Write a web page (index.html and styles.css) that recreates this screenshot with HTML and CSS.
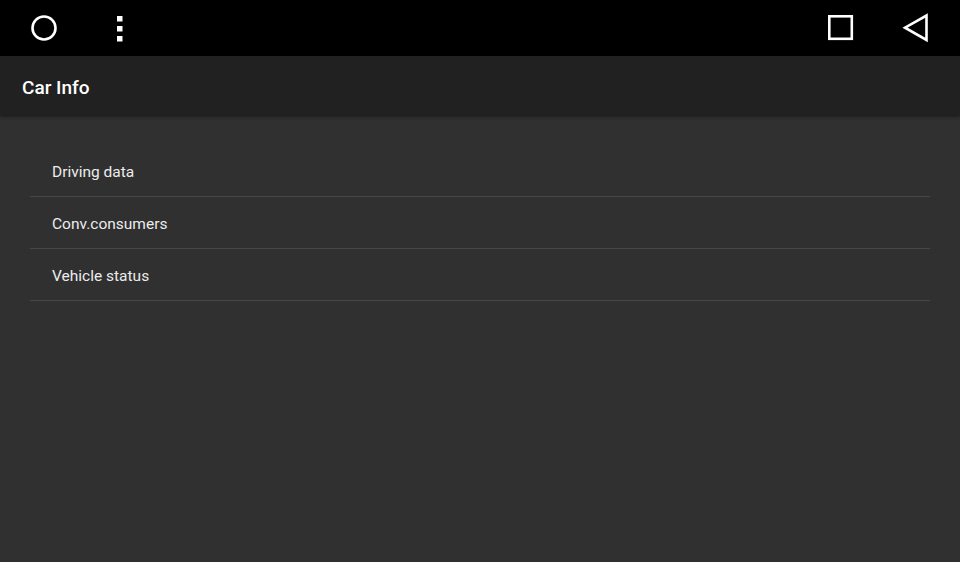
FILE: index.html
```html
<!DOCTYPE html>
<html>
<head>
<meta charset="utf-8">
<link rel="stylesheet" href="styles.css">
</head>
<body>
<div class="status">
  <div class="status-left">
    <svg class="ico" width="28" height="28" viewBox="0 0 28 28"><circle cx="14" cy="14" r="11.5" fill="none" stroke="#fff" stroke-width="2.6"/></svg>
    <svg class="ico dots" width="8" height="28" viewBox="0 0 8 28"><rect x="1" y="1" width="5.5" height="5.5" fill="#fff"/><rect x="1" y="11" width="5.5" height="5.5" fill="#fff"/><rect x="1" y="21" width="5.5" height="5.5" fill="#fff"/></svg>
  </div>
  <div class="status-right">
    <svg class="ico" width="28" height="28" viewBox="0 0 28 28"><rect x="2.3" y="2.3" width="22.5" height="22.5" fill="none" stroke="#fff" stroke-width="2.6"/></svg>
    <svg class="ico" width="28" height="30" viewBox="0 0 28 30"><path d="M24.5 2.5 L24.5 27 L3 14.7 Z" fill="none" stroke="#fff" stroke-width="2.6" stroke-linejoin="miter"/></svg>
  </div>
</div>
<div class="appbar"><span class="title">Car Info</span></div>
<div class="content">
  <ul class="list">
    <li class="item">Driving data</li>
    <li class="item">Conv.consumers</li>
    <li class="item">Vehicle status</li>
  </ul>
</div>
</body>
</html>
```
FILE: styles.css
```css
html, body {
  margin: 0;
  padding: 0;
  height: 100%;
  background: #303030;
  font-family: Roboto, "Liberation Sans", sans-serif;
  overflow: hidden;
}
.status {
  height: 56px;
  background: #000;
  display: flex;
  justify-content: space-between;
  align-items: center;
}
.status-left {
  display: flex;
  align-items: center;
  gap: 58px;
  padding-left: 30px;
  margin-top: -1px;
}
.status-right {
  display: flex;
  align-items: center;
  gap: 47px;
  padding-right: 30px;
}
.ico { display: block; }
.dots { margin-top: 2px; }
.appbar {
  height: 59px;
  background: #212121;
  display: flex;
  align-items: center;
  padding-left: 22px;
  position: relative;
  box-shadow: 0 1px 3px rgba(0,0,0,0.35), 0 2px 4px rgba(0,0,0,0.2);
}
.title {
  color: #fff;
  font-size: 19px;
  font-weight: 500;
  margin-top: 4px;
}
.content {
  padding: 30px 30px 0 30px;
}
.list {
  list-style: none;
  margin: 0;
  padding: 0;
}
.item {
  box-sizing: border-box;
  height: 52px;
  border-bottom: 1px solid #474747;
  display: flex;
  align-items: center;
  padding-left: 22px;
  padding-top: 2px;
  color: #ececec;
  font-size: 15.5px;
}
```
